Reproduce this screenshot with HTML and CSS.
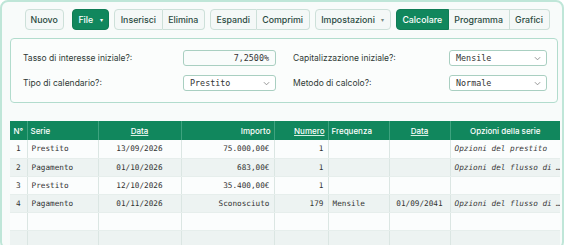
FILE: index.html
```html
<!DOCTYPE html>
<html lang="it">
<head>
  <meta charset="UTF-8" />
  <title>Calcolatore prestito</title>
  <link rel="stylesheet" href="styles.css">
</head>
<body>
  <div class="app">
    <div class="toolbar">
      <button class="btn single nuovo" type="button">Nuovo</button>
      <button class="btn single primary" type="button">File <span class="caret">▾</span></button>
      <div class="group">
        <button class="btn" type="button">Inserisci</button>
        <button class="btn" type="button">Elimina</button>
      </div>
      <div class="group">
        <button class="btn" type="button">Espandi</button>
        <button class="btn" type="button">Comprimi</button>
      </div>
      <button class="btn single" type="button">Impostazioni <span class="caret grey">▾</span></button>
      <div class="group">
        <button class="btn primary" type="button">Calcolare</button>
        <button class="btn" type="button">Programma</button>
        <button class="btn" type="button">Grafici</button>
      </div>
    </div>

    <section class="params">
      <label class="lbl">Tasso di interesse iniziale?:</label>
      <div class="field num">7,2500%</div>
      <label class="lbl right">Capitalizzazione iniziale?:</label>
      <div class="field sel">Mensile <svg class="chev" viewBox="0 0 8 5" width="7" height="5"><path d="M1 1l3 3 3-3" fill="none" stroke="#888" stroke-width="1"/></svg></div>

      <label class="lbl">Tipo di calendario?:</label>
      <div class="field sel">Prestito <svg class="chev" viewBox="0 0 8 5" width="7" height="5"><path d="M1 1l3 3 3-3" fill="none" stroke="#888" stroke-width="1"/></svg></div>
      <label class="lbl right">Metodo di calcolo?:</label>
      <div class="field sel">Normale <svg class="chev" viewBox="0 0 8 5" width="7" height="5"><path d="M1 1l3 3 3-3" fill="none" stroke="#888" stroke-width="1"/></svg></div>
    </section>

    <table class="series">
      <colgroup>
        <col style="width:17px">
        <col style="width:71px">
        <col style="width:83px">
        <col style="width:93px">
        <col style="width:54px">
        <col style="width:61px">
        <col style="width:61px">
        <col style="width:110px">
      </colgroup>
      <thead>
        <tr>
          <th class="c">N°</th>
          <th>Serie</th>
          <th class="c"><u>Data</u></th>
          <th class="r">Importo</th>
          <th class="r"><u>Numero</u></th>
          <th>Frequenza</th>
          <th class="c"><u>Data</u></th>
          <th class="c">Opzioni della serie</th>
        </tr>
      </thead>
      <tbody>
        <tr>
          <td class="c">1</td><td>Prestito</td><td class="c">13/09/2026</td><td class="r">75.000,00€</td>
          <td class="r">1</td><td></td><td></td><td class="opt">Opzioni del prestito</td>
        </tr>
        <tr>
          <td class="c">2</td><td>Pagamento</td><td class="c">01/10/2026</td><td class="r">683,00€</td>
          <td class="r">1</td><td></td><td></td><td class="opt">Opzioni del flusso di …</td>
        </tr>
        <tr>
          <td class="c">3</td><td>Prestito</td><td class="c">12/10/2026</td><td class="r">35.400,00€</td>
          <td class="r">1</td><td></td><td></td><td class="opt"></td>
        </tr>
        <tr>
          <td class="c">4</td><td>Pagamento</td><td class="c">01/11/2026</td><td class="r">Sconosciuto</td>
          <td class="r">179</td><td>Mensile</td><td class="c">01/09/2041</td><td class="opt">Opzioni del flusso di …</td>
        </tr>
        <tr><td></td><td></td><td></td><td></td><td></td><td></td><td></td><td></td></tr>
        <tr><td></td><td></td><td></td><td></td><td></td><td></td><td></td><td></td></tr>
      </tbody>
    </table>
  </div>
</body>
</html>
```

FILE: styles.css
```css
* {
  box-sizing: border-box;
}

body {
  margin: 0;
  font-family: Inter, 'Noto Sans', sans-serif;
  background-color: #ffffff;
  color: #2f3a36;
}

.app {
  width: 564px;
  height: 250px;
  border: 2px solid #bfe6d8;
  border-radius: 8px;
  background-color: #f8fbfa;
  padding: 7px 4px 0 8px;
  overflow: hidden;
}

/* barra degli strumenti */
.toolbar {
  display: flex;
  justify-content: center;
  gap: 5px;
  padding-left: 6px;
}

.btn {
  height: 21px;
  padding: 0 5.6px;
  font-family: Inter, sans-serif;
  font-size: 8.8px;
  font-weight: 500;
  color: #2a4a3f;
  background-color: #f4f8f7;
  border: 1px solid #cde0d9;
  cursor: pointer;
  white-space: nowrap;
}

.btn.single {
  border-radius: 4px;
}

.btn.nuovo {
  margin-right: 3px;
  padding: 0 5px;
}

.btn.primary {
  background-color: #11875d;
  border-color: #0f7c55;
  color: #ffffff;
}

.caret {
  font-size: 6px;
  margin-left: 4px;
  vertical-align: 1px;
}

.caret.grey {
  color: #7a8a84;
}

.group {
  display: flex;
}

.group .btn + .btn {
  border-left: none;
}

.group .btn:first-child {
  border-radius: 4px 0 0 4px;
}

.group .btn:last-child {
  border-radius: 0 4px 4px 0;
}

/* parametri */
.params {
  margin-top: 8px;
  width: 548px;
  background-color: #fbfdfc;
  border: 1px solid #b2dccd;
  border-radius: 4px;
  padding: 11px 0 11px 12px;
  display: grid;
  grid-template-columns: 160px 93px 173px 98px;
  row-gap: 9px;
  align-items: center;
}

.lbl {
  font-size: 8.5px;
  color: #2f3a36;
}

.lbl.right {
  padding-left: 17px;
}

.field {
  height: 16px;
  border: 1px solid #a9cfc1;
  border-radius: 3px;
  background-color: #f9fcfb;
  font-family: 'DejaVu Sans Mono', 'Liberation Mono', monospace;
  font-size: 8.4px;
  color: #333;
  padding: 0 6px;
  display: flex;
  align-items: center;
}

.field.num {
  justify-content: flex-end;
}

.field.sel {
  justify-content: space-between;
  background-color: #ffffff;
  padding-right: 5px;
}

.chev {
  flex: none;
}

/* tabella serie */
.series {
  margin-top: 18px;
  width: 550px;
  border-collapse: collapse;
  table-layout: fixed;
  font-size: 8px;
}

.series th {
  height: 19px;
  background-color: #11875d;
  color: #ffffff;
  font-weight: 500;
  text-align: left;
  padding: 0 3px;
  border-left: 1px solid #3ea37f;
  white-space: nowrap;
}

.series th:first-child {
  border-left: none;
}

.series th u {
  text-decoration-color: #d6efe5;
}

.series td {
  height: 18px;
  padding: 0 4px;
  font-family: 'DejaVu Sans Mono', 'Liberation Mono', monospace;
  font-size: 7.7px;
  color: #333;
  border-left: 1px solid #dbe6e3;
  border-bottom: 1px solid #e6eeec;
  white-space: nowrap;
  overflow: hidden;
}

.series td:first-child {
  border-left: none;
}

.series tbody tr:nth-child(odd) {
  background-color: #fbfdfd;
}

.series tbody tr:nth-child(even) {
  background-color: #edf3f2;
}

.series .c {
  text-align: center;
}

.series .r {
  text-align: right;
}

.series td.opt {
  font-style: italic;
  color: #3a3a3a;
}
```
